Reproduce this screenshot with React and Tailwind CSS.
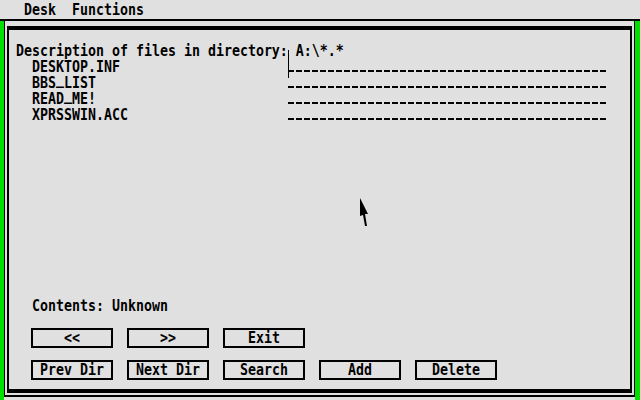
import React from 'react';

// Atari font puts the underscore on the baseline, so lift it a little
const T = ({ children }) => {
  const parts = String(children).split('_');
  return (
    <span className="inline-block scale-y-[1.24] whitespace-pre leading-[12px]">
      {parts.map((p, i) => (
        <React.Fragment key={i}>
          {i > 0 && <span className="relative -top-[3px]">_</span>}
          {p}
        </React.Fragment>
      ))}
    </span>
  );
};

const Dashes = () => (
  <div className="flex gap-[2px] pt-[11px]">
    {Array.from({ length: 40 }).map((_, i) => (
      <span key={i} className="w-[6px] h-[2px] bg-black" />
    ))}
  </div>
);

const files = ['DESKTOP.INF', 'BBS_LIST', 'READ_ME!', 'XPRSSWIN.ACC'];

const Btn = ({ label }) => (
  <div className="w-[82px] h-[20px] border-2 border-black flex items-center justify-center">
    <T>{label}</T>
  </div>
);

export default function App() {
  return (
    <div className="relative w-[640px] h-[400px] bg-[#00e000] font-['DejaVu_Sans_Mono',monospace] font-bold text-[13.29px] leading-[16px] text-black overflow-hidden">
      {/* menu bar */}
      <div className="h-[21px] bg-[#e0e0e0] border-b-2 border-black pl-[24px] pt-[2px]">
        <T>Desk  Functions</T>
      </div>

      <div className="flex h-[379px]">
        <div className="w-[4px]" />
        <div className="w-[631px] bg-[#e0e0e0] pb-[3px] flex flex-col">
          <div className="flex-1 border-x border-b-2 border-black pt-[5px] px-[2px] pb-[2px] flex flex-col">
            <div className="flex-1 relative border-x-2 border-y-4 border-black bg-[#e0e0e0] pl-[7px] pt-[13px]">
              <div className="h-[16px]">
                <T>Description of files in directory: A:\*.*</T>
              </div>
              {files.map((f) => (
                <div key={f} className="flex h-[16px]">
                  <div className="w-[272px] pl-[16px]">
                    <T>{f}</T>
                  </div>
                  <Dashes />
                </div>
              ))}

              <div className="mt-[175px] h-[16px] pl-[16px]">
                <T>Contents: Unknown</T>
              </div>

              <div className="mt-[14px] pl-[15px] flex gap-[14px]">
                <Btn label="<<" />
                <Btn label=">>" />
                <Btn label="Exit" />
              </div>
              <div className="mt-[12px] pl-[15px] flex gap-[14px]">
                <Btn label="Prev Dir" />
                <Btn label="Next Dir" />
                <Btn label="Search" />
                <Btn label="Add" />
                <Btn label="Delete" />
              </div>

              {/* text cursor */}
              <div className="absolute left-[279px] top-[20px] w-px h-[28px] bg-black" />
            </div>
          </div>
        </div>
      </div>

      {/* mouse pointer */}
      <svg className="absolute left-[360px] top-[198px]" width="9" height="29" viewBox="0 0 9 29">
        <polygon points="0,0 8,16 5,16 7,28 5,28 3,17 0,18" fill="#000" />
      </svg>
    </div>
  );
}
